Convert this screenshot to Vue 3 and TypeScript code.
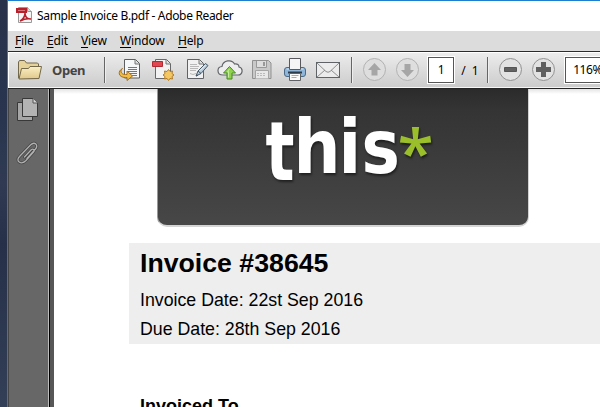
<script setup lang="ts">
interface MenuItem {
  key: string
  rest: string
}

const menus: MenuItem[] = [
  { key: 'F', rest: 'ile' },
  { key: 'E', rest: 'dit' },
  { key: 'V', rest: 'iew' },
  { key: 'W', rest: 'indow' },
  { key: 'H', rest: 'elp' },
]
const page = 1
const pageCount = 1
const zoom = '116%'
</script>

<template>
  <div class="desktop">
    <div class="window">
      <header class="titlebar">
        <svg class="app-icon" width="17" height="17" viewBox="0 0 17 17">
          <path d="M2.500 .5h9l4 4v11h-13z" fill="#f5f5f5" stroke="#999" />
          <path d="M11.500 .5v4h4" fill="#ddd" stroke="#999" />
          <path d="M0 1h11v5H0z" fill="#b5202b" />
          <path d="M2 3.500h7" stroke="#d9747b" />
          <path d="M4 14c3-1 5-5 5-8 0 4 2 6 6 6-4-1-7 0-11 2z" fill="none" stroke="#b5202b" stroke-width="1.500" />
        </svg>
        <span class="title">Sample Invoice B.pdf - Adobe Reader</span>
      </header>

      <nav class="menubar">
        <span v-for="m in menus" :key="m.key" class="menu" :class="'menu-' + m.key"><u>{{ m.key }}</u>{{ m.rest }}</span>
      </nav>

      <div class="toolbar">
        <svg class="folder" width="26" height="20" viewBox="0 0 26 20">
          <defs>
            <linearGradient id="fold" x1="0" y1="0" x2="0" y2="1">
              <stop offset="0" stop-color="#fbf0c4" />
              <stop offset="1" stop-color="#dfc88b" />
            </linearGradient>
          </defs>
          <path d="M1.500 18V2l1-1.500h5l2 2.500h11l1 1v5l-2 9.500z" fill="#e6d39c" stroke="#74684a" />
          <path d="M2 19 4.500 8.500h7L13 6.500h11.500L22 18.500z" fill="url(#fold)" stroke="#74684a" />
        </svg>
        <span class="open">Open</span>
        <i class="sep sep-a"></i>

        <svg class="tool t1" width="24" height="24" viewBox="0 0 24 24">
          <path d="M6.500 1.500h11l4 4v14.500h-15z" fill="#f6f7f8" stroke="#5c5f62" />
          <path d="M17 2v4h4" fill="#d8d8d8" stroke="#777" />
          <path d="M10 9.500h9M10 11.500h9M10 13.500h9M11 15.500h8M13 17.500h6" stroke="#3d83c8" />
          <path d="M4.500 10.500c-2.500 2-2 6 3 6h1.500v-3.500l5.500 5-5.500 4.500v-3H7.500C0 19.500-.5 13 4.500 10.500z" fill="#f2bd43" stroke="#a56e1c" />
        </svg>

        <svg class="tool t2" width="24" height="24" viewBox="0 0 24 24">
          <path d="M4.500 1.500h11l4 4v15h-15z" fill="#f2f2f2" stroke="#66686a" />
          <path d="M15 2v4h4" fill="#ddd" stroke="#777" />
          <path d="M1.500 3.500h10v5h-10z" fill="#e04650" stroke="#b32730" />
          <path d="m17.500 11.500 1.500 2 2.500-.5-.5 2.500 2 1.500-2 1.500.5 2.500-2.500-.5-1.500 2-1.500-2-2.500.5.5-2.500-2-1.500 2-1.500-.5-2.500 2.500.5z" fill="#f4c763" stroke="#b17b26" />
        </svg>

        <svg class="tool t3" width="24" height="24" viewBox="0 0 24 24">
          <path d="M1.500 1.500h12l4 4v15h-16z" fill="#f1f1f1" stroke="#606366" />
          <path d="M13 2v4h4" fill="#ddd" stroke="#777" />
          <path d="M4 6.500h7M4 8.500h9M4 10.500h8M4 12.500h6M4 15.500l3 1 3-1" fill="none" stroke="#b8b8b8" />
          <path d="m10 18 2-5 7.500-7.500 2.500 2-7 8z" fill="#b8cbdc" stroke="#485b6b" />
          <path d="m14 12.500 5.500-5.500" stroke="#f4f8fb" />
          <path d="m12 13 3 2.500M10 18l2-1" stroke="#3f4f5d" />
        </svg>

        <svg class="tool t4" width="26" height="24" viewBox="0 0 26 24">
          <path d="M6 17C-.5 17-.5 9 5 8.500 6 2 15 1 17.500 6c3-.5 4.500 1 4.500 3 4.500 1 4 8-1 8z" fill="#eee" stroke="#626569" stroke-width="1.200" />
          <path d="m12.500 8.500 6 6.500h-3.500v6h-5v-6H6.500z" fill="#8fd34c" stroke="#458922" />
          <path d="m12.500 11-2 2.500h1v6" fill="none" stroke="#c6ef9c" />
        </svg>

        <svg class="tool t5" width="22" height="24" viewBox="0 0 22 24">
          <path d="M1.500 2.500h16l2.500 2.500v15.500H1.500z" fill="#c9c9c9" stroke="#919191" />
          <path d="M5.500 3v6.500h10V3" fill="#dedede" stroke="#999" />
          <path d="M12 4h2v4h-2z" fill="#999" />
          <path d="M4.500 20.500v-8h13v8" fill="#e8e8e8" stroke="#a5a5a5" />
          <path d="M6 15.500h9M6 17.500h9" stroke="#bbb" stroke-dasharray="2 1" />
        </svg>

        <svg class="tool t6" width="24" height="24" viewBox="0 0 24 24">
          <rect x="1.500" y="9.500" width="21" height="9" rx="2.500" fill="#8fb6d8" stroke="#4a6a87" />
          <path d="M3.500 11h17" stroke="#c1d7ea" stroke-width="1.500" />
          <path d="M6.500 .5h11v11h-11z" fill="#f5f5f5" stroke="#57595c" />
          <path d="M5 14.500h14" stroke="#2c3b49" stroke-width="2" />
          <path d="M6.500 15.500h11v7h-11z" fill="#fafafa" stroke="#606366" />
          <path d="M8.500 17.500h7M8.500 19.500h5" stroke="#aaa" />
        </svg>

        <svg class="tool t7" width="26" height="20" viewBox="0 0 26 20">
          <rect x="1.500" y="2.500" width="23" height="15" fill="#ececec" stroke="#606366" />
          <path d="m2 17 8-7m14 7-8-7M2 3l9 8.500q2 1.500 4 0L24 3" fill="none" stroke="#8c8e90" />
        </svg>
        <i class="sep sep-b"></i>

        <svg class="tool up" width="24" height="24" viewBox="0 0 24 24">
          <circle cx="11.500" cy="11.500" r="11" fill="#dedede" stroke="#b2b2b2" />
          <path d="m11.500 5 6.500 7h-3.500v5.500h-6V12H5z" fill="#a6a6a6" />
        </svg>
        <svg class="tool down" width="24" height="24" viewBox="0 0 24 24">
          <circle cx="11.500" cy="11.500" r="11" fill="#dedede" stroke="#b2b2b2" />
          <path d="m11.500 19 6.500-7h-3.500V6h-6v6H5z" fill="#a6a6a6" />
        </svg>
        <span class="field page-field">{{ page }}</span>
        <span class="count">/&nbsp; {{ pageCount }}</span>
        <i class="sep sep-c"></i>
        <svg class="tool minus" width="24" height="24" viewBox="0 0 24 24">
          <circle cx="11.500" cy="11.500" r="11" fill="#e2e2e2" stroke="#929292" />
          <path d="M5.500 9.500h12v4h-12z" fill="#626262" stroke="#555" />
        </svg>
        <svg class="tool plus" width="24" height="24" viewBox="0 0 24 24">
          <circle cx="11.500" cy="11.500" r="11" fill="#e2e2e2" stroke="#929292" />
          <path d="M9 4h5v5h5v5h-5v5H9v-5H4V9h5z" fill="#5f5f5f" />
        </svg>
        <span class="field zoom-field">{{ zoom }}</span>
      </div>

      <div class="workspace">
        <aside class="sidebar">
          <svg width="24" height="26" viewBox="0 0 24 26">
            <path d="M1.500 5.500h15v18h-15z" fill="#a6a6a6" stroke="#383838" />
            <path d="M6.500 1.500h10.500l4.500 4.500v13.500h-15z" fill="#b3b3b3" stroke="#383838" />
            <path d="M17 1.500v4.500h4.500" fill="#d5d5d5" stroke="#555" />
          </svg>
          <svg class="clip" width="24" height="24" viewBox="0 0 24 24">
            <g fill="none" stroke-linecap="round">
              <path class="clip-edge" d="M8.500 16 15 9c2-2 4.500 0 2.500 2l-7.500 8.500C5 24.500-1 20 3.500 15.500L14.500 4C18.500 0 23 4 19.500 8L11 17.500" />
              <path class="clip-wire" d="M8.500 16 15 9c2-2 4.500 0 2.500 2l-7.500 8.500C5 24.500-1 20 3.500 15.500L14.500 4C18.500 0 23 4 19.500 8L11 17.500" />
            </g>
          </svg>
        </aside>
        <main class="document">
          <div class="logo">
            <svg width="370" height="137" viewBox="158 89 370 137">
              <g class="logo-shadow">
                <text class="word" transform="translate(265.500 180) scale(.74 1)" font-size="82">t</text>
                <text class="word" transform="translate(293.500 173) scale(.88 1)" font-size="75">h</text>
                <text class="word" transform="translate(338.500 173) scale(.88 1)" font-size="75">i</text>
                <text class="word" transform="translate(361.500 173) scale(.86 1)" font-size="75">s</text>
                <text class="star" x="397.500" y="175.500" font-size="66">*</text>
              </g>
            </svg>
          </div>
          <section class="summary">
            <h1>Invoice #38645</h1>
            <p>Invoice Date: 22st Sep 2016</p>
            <p>Due Date: 28th Sep 2016</p>
          </section>
          <h2>Invoiced To</h2>
        </main>
      </div>
    </div>
  </div>
</template>

<style>
body {
  margin: 0;
  overflow: hidden;
}
</style>

<style scoped>
* {
  box-sizing: border-box;
}
svg {
  display: block;
  flex: none;
}
.desktop {
  width: 600px;
  height: 407px;
  padding-left: 7px;
  overflow: hidden;
  background: linear-gradient(#28324b, #29344e 30%, #303b53 45%, #263149 60%, #333e57);
  font-family: 'Noto Sans', 'Open Sans', sans-serif;
}
.window {
  height: 407px;
  border-top: 1px solid #1c7fd0;
  border-left: 1px solid #1c7fd0;
  display: flex;
  flex-direction: column;
}
.titlebar {
  height: 30px;
  flex: none;
  display: flex;
  align-items: center;
  padding: 0 0 1px 8px;
  background: #fff;
}
.title {
  margin-left: 4px;
  font-size: 12px;
  letter-spacing: -0.33px;
  white-space: nowrap;
  color: #000;
}
.menubar {
  height: 20px;
  flex: none;
  display: flex;
  align-items: center;
  padding-left: 7px;
  background: #dcdcdc;
  font-size: 12px;
  line-height: 20px;
  color: #000;
}
.menu {
  flex: none;
  white-space: nowrap;
  letter-spacing: -0.15px;
}
.menu u {
  text-underline-offset: 2px;
}
.menu-F { width: 32px; }
.menu-E { width: 34px; }
.menu-V { width: 39px; }
.menu-W { width: 58px; }
.toolbar {
  height: 38px;
  flex: none;
  display: flex;
  align-items: center;
  padding-left: 9px;
  border-top: 1px solid #2b2b2b;
  border-bottom: 1px solid #242424;
  box-shadow: inset 1px 1px #fff, inset 0 -1px #f5f5f5;
  background: linear-gradient(#ededed, #cbcbcb);
}
.open {
  width: 34px;
  margin-left: 9px;
  font-size: 13px;
  font-weight: 700;
  letter-spacing: -0.4px;
  color: #454545;
}
.sep {
  width: 2px;
  height: 26px;
  flex: none;
  border-left: 1px solid #666;
  background: #eee;
}
.sep-a { margin-left: 19px; }
.t1 { margin-left: 12px; }
.t2 { margin-left: 9px; }
.t3 { margin-left: 11px; }
.t4 { margin-left: 7px; }
.t5 { margin-left: 8px; }
.t6 { margin-left: 10px; }
.t7 { margin-left: 8px; }
.sep-b { margin-left: 10px; }
.up { margin-left: 10px; }
.down { margin-left: 9px; }
.field {
  height: 26px;
  flex: none;
  background: #fff;
  border: 1px solid #555;
  outline: 1px solid #fff;
  font-size: 12px;
  line-height: 24px;
  text-align: center;
}
.page-field {
  width: 26px;
  margin-left: 8px;
}
.count {
  width: 26px;
  margin-left: 7px;
  flex: none;
  font-size: 12px;
  white-space: nowrap;
}
.minus { margin-left: 10px; }
.plus { margin-left: 9px; }
.zoom-field {
  width: 60px;
  margin-left: 9px;
  padding-left: 7px;
  text-align: left;
  letter-spacing: -0.4px;
}
.workspace {
  flex: 1;
  display: flex;
  min-height: 0;
}
.sidebar {
  width: 46px;
  flex: none;
  padding: 8px 0 0 7px;
  border-left: 1px solid #454545;
  background: linear-gradient(90deg, #676767 39px, #bcbcbc 39px, #bcbcbc 40px, #000 40px, #000 41px, #575757 41px);
}
.clip {
  margin-top: 18px;
}
.clip-edge {
  stroke: #444;
  stroke-width: 2.8px;
}
.clip-wire {
  stroke: #b0b0b0;
  stroke-width: 1.3px;
}
.document {
  flex: 1;
  min-width: 0;
  background: linear-gradient(#e4e4e4, #fff 5px);
  font-family: 'Liberation Sans', Arial, sans-serif;
  color: #000;
}
.logo {
  width: 372px;
  height: 138px;
  margin-left: 103px;
  border: 1px solid #aaa;
  border-width: 0 1px 2px;
  border-color: #aaa #d2d2d2 #d4d4d4 #999;
  border-radius: 0 0 10px 10px;
  background: linear-gradient(#2b2b2b, #343434 15%, #474747);
  overflow: hidden;
}
.word {
  font-family: 'DejaVu Sans', sans-serif;
  font-weight: 700;
  fill: #fff;
}
.star {
  font-family: 'Open Sans', sans-serif;
  font-weight: 600;
  fill: #9bbf2b;
}
.logo-shadow {
  filter: drop-shadow(1px 2px 1px rgba(0, 0, 0, 0.5));
}
.summary {
  height: 101px;
  margin: 16px 0 0 75px;
  padding: 4px 0 0 11px;
  background: #eee;
}
.summary h1 {
  margin: 0 0 7px;
  font-size: 26.7px;
  line-height: 32px;
  font-weight: 700;
  white-space: nowrap;
}
.summary p {
  margin: 0;
  font-size: 17.75px;
  line-height: 29px;
  white-space: nowrap;
}
h2 {
  margin: 51px 0 0 86px;
  font-size: 18px;
  line-height: 22px;
  font-weight: 700;
  white-space: nowrap;
}
</style>
